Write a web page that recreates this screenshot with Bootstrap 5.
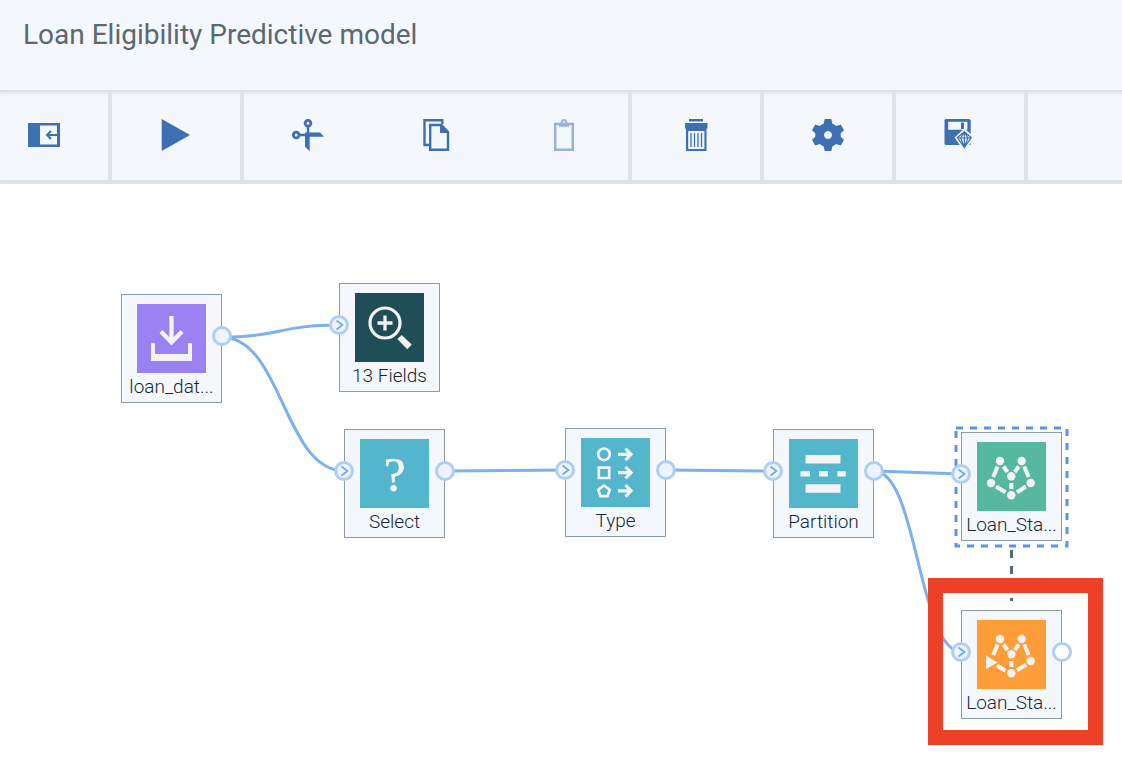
<!DOCTYPE html>
<html lang="en">
<head>
<meta charset="utf-8">
<meta name="viewport" content="width=device-width, initial-scale=1">
<title>Loan Eligibility Predictive model</title>
<link href="https://cdn.jsdelivr.net/npm/bootstrap@5.3.0/dist/css/bootstrap.min.css" rel="stylesheet">
<style>
  :root { --panel: #f4f7fc; --rule: #dfe3e6; --ink: #3d70b2; --wire: #7cb0ee; --port: #afcef3; }
  body { font-family: Roboto, "Liberation Sans", sans-serif; background: #fff; }
  .titlebar { background: var(--panel); height: 90px; padding: 15px 23px; }
  .titlebar h1 { font-size: 28px; line-height: 40px; color: #5a6872; font-weight: 400; }
  .toolbar { background: var(--panel); border-bottom: 4px solid var(--rule); height: 94px; box-shadow: inset 0 6px 5px -4px rgba(60, 70, 80, .18); }
  .tool-group { border-right: 4px solid var(--rule); }
  .tool { width: 128px; color: var(--ink); border: 0; border-radius: 0; padding: 0; }
  .tool:hover { color: var(--ink); background: #e6edf7; }
  .tool:disabled { color: var(--ink); opacity: .5; }
  .tool-edge { width: 108px; padding-right: 20px; }
  .tool svg { width: 32px; height: 32px; display: block; margin: auto; }
  .flow { min-height: 570px; }
  .wires { left: 0; top: 0; width: 100%; height: 100%; fill: none; }
  .wires .link-line { stroke: var(--wire); stroke-width: 3; }
  .node { width: 101px; height: 109px; background: var(--panel); border: 1px solid #8c9ba6; padding-top: 9px; color: #152935; }
  .node-icon { width: 69px; height: 69px; fill: #f3f3f3; flex: none; }
  .node-icon .ln { fill: none; stroke: #f3f3f3; }
  .node-label { font-size: 19px; line-height: 27px; font-weight: 300; white-space: nowrap; }
  .port { width: 20px; height: 20px; border: 3px solid var(--port); border-radius: 50%; background: #edf4fe; top: 31px; }
  .port svg { display: block; width: 14px; height: 14px; fill: none; stroke: #6ea5ea; stroke-width: 1.6; }
  .port-in { left: -11px; }
  .port-out { right: -11px; }
  .port-open { background: #fff; }
  .teal { background: #53b6cc; }
  #n-data { left: 121px; top: 110px; }
  #n-fields { left: 339px; top: 99px; }
  #n-select { left: 344px; top: 245px; }
  #n-type { left: 565px; top: 244px; }
  #n-partition { left: 773px; top: 245px; }
  #n-model { left: 961px; top: 248px; }
  #n-nugget { left: 961px; top: 426px; }
  #n-data .node-icon { background: #9b82f3; }
  #n-fields .node-icon { background: #1f4e57; }
  #n-model .node-icon { background: #56b99f; }
  #n-nugget .node-icon { background: #ff9e39; }
  .callout { left: 928px; top: 394px; width: 175px; height: 167px; border: 15px solid #ed4026; pointer-events: none; }
</style>
</head>
<body class="d-flex flex-column min-vh-100">
<header class="titlebar"><h1 class="m-0">Loan Eligibility Predictive model</h1></header>

<nav class="toolbar d-flex" aria-label="Flow tools">
  <div class="tool-group d-flex">
    <button class="btn tool tool-edge" type="button" aria-label="Collapse palette"><svg viewBox="0 0 32 32"><path fill="currentColor" fill-rule="evenodd" d="M0 4h32v24H0zM12 6.500v19h17v-19z"/><path d="M30 16H19.500M23 12l-4 4 4 4" fill="none" stroke="currentColor" stroke-width="2"/></svg></button>
  </div>
  <div class="tool-group d-flex">
    <button class="btn tool" type="button" aria-label="Run"><svg viewBox="0 0 32 32"><path fill="currentColor" d="M1.700 0 30 16 1.700 32z"/></svg></button>
  </div>
  <div class="tool-group d-flex">
    <button class="btn tool" type="button" aria-label="Cut"><svg viewBox="0 0 32 32"><g fill="none" stroke="currentColor" stroke-width="2.800"><circle cx="16" cy="4.200" r="2.900"/><circle cx="4.200" cy="16" r="2.900"/></g><path stroke="currentColor" stroke-width="2.400" d="M16 7v9M7 16h9"/><path fill="currentColor" d="M13 13.500h15l4 4.200H17.700V32L13 27.800z"/></svg></button>
    <button class="btn tool" type="button" aria-label="Copy"><svg viewBox="0 0 32 32"><g fill="none" stroke="currentColor" stroke-width="2.400"><path d="M22.300 5V1.200H4.500V26H9"/><path d="M10.200 6h11l6.800 7v17.800H10.200z"/></g><path fill="currentColor" d="M20 5.500h1.500l7.300 7.300V14H20z"/></svg></button>
    <button class="btn tool" type="button" aria-label="Paste" disabled><svg viewBox="0 0 32 32"><path fill="none" stroke="currentColor" stroke-width="2.400" d="M7.200 5h17.600v25.800H7.200z"/><path fill="currentColor" fill-rule="evenodd" d="M11 7.800V4.200L13 3a3 3 0 0 1 6 0l2 1.200v3.600zM16 2a1.400 1.400 0 1 0 .01 0z"/></svg></button>
  </div>
  <div class="tool-group d-flex">
    <button class="btn tool" type="button" aria-label="Delete"><svg viewBox="0 0 32 32"><path fill="currentColor" fill-rule="evenodd" d="M9 0h14v2.400H9zM5 4h22.500v5.500h-1V32H6V9.500H5zM8.200 12v18h16.200V12z"/><path stroke="currentColor" stroke-width="1.300" d="M11 14v14M14.500 14v14M18 14v14M21.500 14v14"/></svg></button>
  </div>
  <div class="tool-group d-flex">
    <button class="btn tool" type="button" aria-label="Settings"><svg viewBox="0 0 32 32"><path fill="currentColor" fill-rule="evenodd" d="M12.700 0h6.600l1 4.600 4 2.300 4.500-1.400L32 11.200l-3.300 3.100v3.400L32 20.800l-3.200 5.700-4.500-1.400-4 2.300-1 4.600h-6.600l-1-4.600-4-2.300-4.500 1.400L0 20.800l3.300-3.100v-3.400L0 11.200l3.200-5.700 4.500 1.400 4-2.300zM16 12a4 4 0 1 0 .01 0z"/></svg></button>
  </div>
  <div class="tool-group d-flex">
    <button class="btn tool" type="button" aria-label="Save model"><svg viewBox="0 0 32 32"><path fill="currentColor" fill-rule="evenodd" d="M1.500 0h24l1.200 1.200V26H1.500l-1-1V1zM4.200 2.800v8h19.200v-8z"/><path fill="currentColor" d="M17 3.500h3V10h-3z"/><path fill="#f4f7fc" d="M20.300 9.600 31 18.500 20.300 32.500 10.500 18.500z"/><path fill="none" stroke="currentColor" stroke-width="1.200" d="M20.300 12.700l7 6-7 9.800-7-9.800zM13.300 19h14M20.300 12.700l-3.600 6.300 3.600 9.500 3.600-9.500zM20.300 12.700v15.800"/></svg></button>
  </div>
</nav>

<main class="flow position-relative flex-grow-1 overflow-hidden">
  <svg class="wires position-absolute" aria-hidden="true">
    <g>
      <path class="link-line" d="M221 153C280 153 280 141 339 141"/>
      <path class="link-line" d="M221 153C283 153 283 287 345 287"/>
      <path class="link-line" d="M445 287L566 286"/>
      <path class="link-line" d="M666 286L774 287"/>
      <path class="link-line" d="M874 287L962 290"/>
      <path class="link-line" d="M874 287C918 287 918 468 962 468"/>
    </g>
    <path d="M1011.500 366V417" stroke="#5a6872" stroke-width="3" stroke-dasharray="8 8"/>
    <rect x="956" y="244" width="111" height="118" stroke="#5596e6" stroke-width="3" stroke-dasharray="7 7"/>
  </svg>

  <div class="node position-absolute d-flex flex-column align-items-center" id="n-data">
    <svg class="node-icon" viewBox="0 0 69 69"><path class="ln" stroke-width="4.300" d="M34.500 12v26M24 27.500l10.500 11L45 27.500"/><path d="M14 39.300h4V50h33V39.300h4V57H14z"/></svg>
    <span class="node-label">loan_dat...</span>
    <span class="port port-out position-absolute"></span>
  </div>

  <div class="node position-absolute d-flex flex-column align-items-center" id="n-fields">
    <svg class="node-icon" viewBox="0 0 69 69"><circle class="ln" cx="30" cy="30" r="15" stroke-width="3.200"/><path class="ln" stroke-width="3.300" d="M22.500 30h15M30 22.500v15"/><path d="M42.300 46l4.400-4 10 9.500-4.400 4.800z"/></svg>
    <span class="node-label">13 Fields</span>
    <span class="port port-in position-absolute"><svg viewBox="0 0 14 14"><path d="M4.500 2.500l6 4.500-6 4.500"/></svg></span>
  </div>

  <div class="node position-absolute d-flex flex-column align-items-center" id="n-select">
    <svg class="node-icon teal" viewBox="0 0 69 69"><text x="34.500" y="52" text-anchor="middle" font-family="Liberation Serif, serif" font-size="49" stroke="#f3f3f3" stroke-width=".7">?</text></svg>
    <span class="node-label">Select</span>
    <span class="port port-in position-absolute"><svg viewBox="0 0 14 14"><path d="M4.500 2.500l6 4.500-6 4.500"/></svg></span>
    <span class="port port-out position-absolute"></span>
  </div>

  <div class="node position-absolute d-flex flex-column align-items-center" id="n-type">
    <svg class="node-icon teal" viewBox="0 0 69 69"><g class="ln" stroke-width="2.700"><circle cx="23" cy="16.300" r="5.800"/><path d="M17.800 29.600h10.400v10.400H17.800zM23 47.500l5.700 4.200-2.200 6.500h-7l-2.200-6.500z"/><path stroke-width="3.200" d="M37 16.300h13M44.500 10.500l5.500 5.800-5.500 5.800M37 34.600h13M44.500 28.800l5.500 5.800-5.500 5.800M37 52.800h13M44.500 47l5.500 5.800-5.500 5.800"/></g></svg>
    <span class="node-label">Type</span>
    <span class="port port-in position-absolute"><svg viewBox="0 0 14 14"><path d="M4.500 2.500l6 4.500-6 4.500"/></svg></span>
    <span class="port port-out position-absolute"></span>
  </div>

  <div class="node position-absolute d-flex flex-column align-items-center" id="n-partition">
    <svg class="node-icon teal" viewBox="0 0 69 69"><path d="M16.500 16h35v8.500h-35zM16.500 45.300h35v8.500h-35zM11.500 32.200H21v5.300h-9.500zM30 32.200h9v5.300h-9zM48.300 32.200h8.500v5.300h-8.500z"/></svg>
    <span class="node-label">Partition</span>
    <span class="port port-in position-absolute"><svg viewBox="0 0 14 14"><path d="M4.500 2.500l6 4.500-6 4.500"/></svg></span>
    <span class="port port-out position-absolute"></span>
  </div>

  <div class="node position-absolute d-flex flex-column align-items-center" id="n-model">
    <svg class="node-icon" viewBox="0 0 69 69"><circle cx="23" cy="19" r="4.200"/><circle cx="44.700" cy="19" r="4.200"/><circle cx="34.300" cy="34.300" r="4.200"/><circle cx="14" cy="41" r="4.200"/><circle cx="53.700" cy="41" r="4.200"/><circle cx="34.300" cy="53.300" r="4.200"/><path class="ln" stroke-width="4" d="M20.500 24.500l-4.300 10.500M26.500 24.500l4 5.500M41.700 24.500l-4 5.500M47.200 24.500l4.500 10.500M34.300 41v6M19 44.500l9.500 5.800M49 44.500l-9 5.800"/></svg>
    <span class="node-label">Loan_Sta...</span>
    <span class="port port-in position-absolute"><svg viewBox="0 0 14 14"><path d="M4.500 2.500l6 4.500-6 4.500"/></svg></span>
  </div>

  <div class="node position-absolute d-flex flex-column align-items-center" id="n-nugget">
    <svg class="node-icon" viewBox="0 0 69 69"><circle cx="23" cy="19" r="4.200"/><circle cx="44.700" cy="19" r="4.200"/><circle cx="34.300" cy="34.300" r="4.200"/><path d="M9 35.500l11.500 7L9 49z"/><circle cx="53.700" cy="41" r="4.200"/><circle cx="34.300" cy="53.300" r="4.200"/><path class="ln" stroke-width="4" d="M20.500 24.500l-4.300 10.500M26.500 24.500l4 5.500M41.700 24.500l-4 5.500M47.200 24.500l4.500 10.500M34.300 41v6M20 45.500l8.500 5.200M49 44.500l-9 5.800"/></svg>
    <span class="node-label">Loan_Sta...</span>
    <span class="port port-in position-absolute"><svg viewBox="0 0 14 14"><path d="M4.500 2.500l6 4.500-6 4.500"/></svg></span>
    <span class="port port-out port-open position-absolute"></span>
  </div>

  <div class="callout position-absolute"></div>
</main>
<script src="https://cdn.jsdelivr.net/npm/bootstrap@5.3.0/dist/js/bootstrap.bundle.min.js"></script>
</body>
</html>
